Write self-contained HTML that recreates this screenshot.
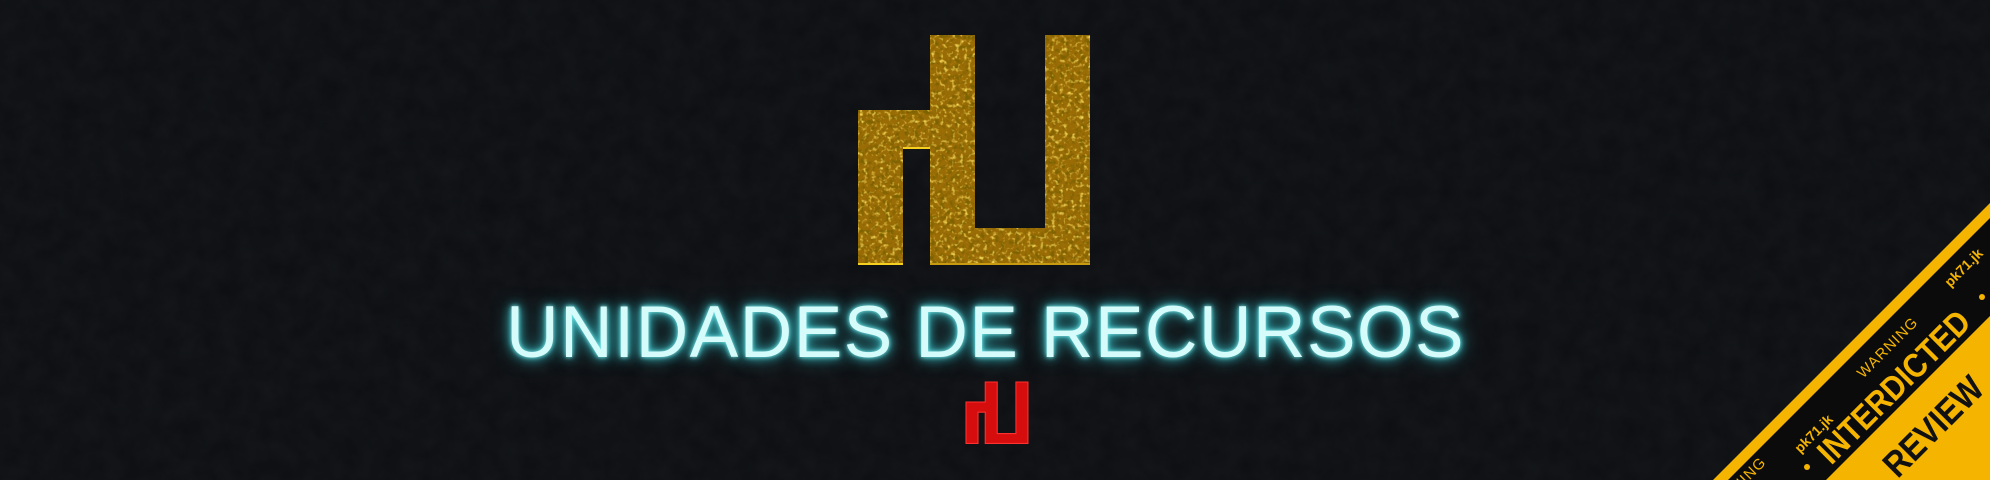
<!DOCTYPE html>
<html><head><meta charset="utf-8">
<style>
html,body{margin:0;padding:0;background:#0c0e11;}
body{width:1990px;height:480px;overflow:hidden;position:relative;}
.t{position:absolute;left:506px;top:283px;font-family:"Liberation Sans",sans-serif;font-size:73px;line-height:100px;letter-spacing:1.3px;color:#d6fbfb;white-space:nowrap;
text-shadow:0 0 4px #7ff0f0,0 0 10px #3fd0d8,0 0 18px #2aa8b0;}
svg{position:absolute;left:0;top:0;overflow:hidden;}
</style></head><body>
<svg width="1990" height="480" viewBox="0 0 1990 480">
<defs>
<filter id="bgn" x="0" y="0" width="100%" height="100%">
<feTurbulence type="fractalNoise" baseFrequency="0.05" numOctaves="3" seed="3"/>
<feColorMatrix values="0 0 0 0 0.12  0 0 0 0 0.13  0 0 0 0 0.15  0 0 0 0.1 0"/>
</filter>
<filter id="dark" x="0" y="0" width="100%" height="100%">
<feTurbulence type="fractalNoise" baseFrequency="0.2" numOctaves="2" seed="7" result="n"/>
<feColorMatrix in="n" values="0 0 0 0 0.2  0 0 0 0 0.12  0 0 0 0 0  0 0 0 3.4 -1.6" result="c"/>
<feComposite in="c" in2="SourceGraphic" operator="in"/>
</filter>
<filter id="lite" x="0" y="0" width="100%" height="100%">
<feTurbulence type="fractalNoise" baseFrequency="0.25" numOctaves="2" seed="21" result="n"/>
<feColorMatrix in="n" values="0 0 0 0 0.95  0 0 0 0 0.72  0 0 0 0 0.1  0 0 0 3 -1.6" result="c"/>
<feComposite in="c" in2="SourceGraphic" operator="in"/>
</filter>
<clipPath id="cl"><rect width="1990" height="480"/></clipPath>
</defs>
<rect width="1990" height="480" fill="#0c0e11"/>
<rect width="1990" height="480" filter="url(#bgn)"/>
<path d="M858,110 L930,110 L930,35 L975,35 L975,228 L1045,228 L1045,35 L1090,35 L1090,265 L930,265 L930,148 L903,148 L903,265 L858,265 Z" fill="#9a6c06"/>
<path d="M858,110 L930,110 L930,35 L975,35 L975,228 L1045,228 L1045,35 L1090,35 L1090,265 L930,265 L930,148 L903,148 L903,265 L858,265 Z" fill="#000" filter="url(#dark)"/>
<path d="M858,110 L930,110 L930,35 L975,35 L975,228 L1045,228 L1045,35 L1090,35 L1090,265 L930,265 L930,148 L903,148 L903,265 L858,265 Z" fill="#000" filter="url(#lite)"/>
<rect x="903" y="147" width="27" height="2" fill="#f5d020"/>
<rect x="858" y="263" width="45" height="2" fill="#f5d020"/>
<rect x="930" y="263" width="160" height="2" fill="#c89a10"/>
<g transform="translate(966,382) scale(0.267) translate(-858,-35)">
<path d="M858,110 L930,110 L930,35 L975,35 L975,228 L1045,228 L1045,35 L1090,35 L1090,265 L930,265 L930,148 L903,148 L903,265 L858,265 Z" fill="#d50d0d" stroke="#ff3030" stroke-width="4"/>
</g>
<g clip-path="url(#cl)">
<polygon points="1990,203 1990,480 1713,480" fill="#f5b400"/>
<polygon points="1990,218 1990,480 1728,480" fill="#0b0b0b"/>
<polygon points="1990,316 1990,480 1826,480" fill="#f5b400"/>
<g font-family="Liberation Sans,sans-serif" fill="#f5b400">
<text transform="translate(1891,351) rotate(-45)" text-anchor="middle" font-size="15" letter-spacing="1">WARNING</text>
<text transform="translate(1739,491) rotate(-45)" text-anchor="middle" font-size="15" letter-spacing="1">WARNING</text>
<text transform="translate(1817,437) rotate(-45)" text-anchor="middle" font-size="14" font-weight="bold">pk71.jk</text>
<text transform="translate(1967,271) rotate(-45)" text-anchor="middle" font-size="14" font-weight="bold">pk71.jk</text>
<text transform="translate(1902,395) rotate(-45)" text-anchor="middle" font-size="34" font-weight="bold" textLength="200" lengthAdjust="spacingAndGlyphs">INTERDICTED</text>
<circle cx="1807" cy="467" r="3"/>
<circle cx="1982" cy="297" r="3"/>
</g>
<text transform="translate(1942,435) rotate(-45)" text-anchor="middle" font-family="Liberation Sans,sans-serif" font-size="36" font-weight="bold" fill="#111" textLength="125" lengthAdjust="spacingAndGlyphs">REVIEW</text>
</g>
</svg>
<div class="t">UNIDADES DE RECURSOS</div>
</body></html>
